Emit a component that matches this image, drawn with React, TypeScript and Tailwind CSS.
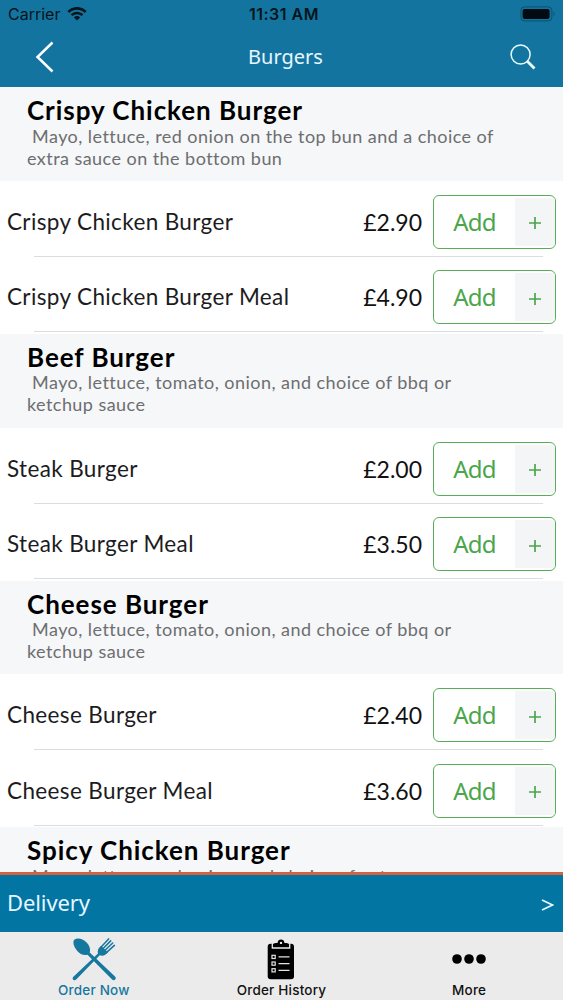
import React from 'react';

interface MenuItem {
  name: string;
  price: string;
}

interface MenuSection {
  title: string;
  description: string;
  items: MenuItem[];
}

const sections: MenuSection[] = [
  {
    title: 'Crispy Chicken Burger',
    description: ' Mayo, lettuce, red onion on the top bun and a choice of\nextra sauce on the bottom bun',
    items: [
      { name: 'Crispy Chicken Burger', price: '£2.90' },
      { name: 'Crispy Chicken Burger Meal', price: '£4.90' },
    ],
  },
  {
    title: 'Beef Burger',
    description: ' Mayo, lettuce, tomato, onion, and choice of bbq or\nketchup sauce',
    items: [
      { name: 'Steak Burger', price: '£2.00' },
      { name: 'Steak Burger Meal', price: '£3.50' },
    ],
  },
  {
    title: 'Cheese Burger',
    description: ' Mayo, lettuce, tomato, onion, and choice of bbq or\nketchup sauce',
    items: [
      { name: 'Cheese Burger', price: '£2.40' },
      { name: 'Cheese Burger Meal', price: '£3.60' },
    ],
  },
  {
    title: 'Spicy Chicken Burger',
    description: ' Mayo, lettuce, red onion, and choice of extra sauce',
    items: [],
  },
];

function WifiIcon() {
  return (
    <svg width="20" height="14" viewBox="0 0 20 14" fill="none" stroke="#06141c">
      <path d="M1.3 4.9a12.4 12.4 0 0 1 17.4 0" strokeWidth="2.8" />
      <path d="M4.5 8.2a7.9 7.9 0 0 1 11 0" strokeWidth="2.5" />
      <path d="M10 13.6 6.9 10.4a4.4 4.4 0 0 1 6.2 0Z" fill="#06141c" stroke="none" />
    </svg>
  );
}

function BatteryIcon() {
  return (
    <svg width="36" height="16" viewBox="0 0 36 16" fill="none">
      <rect x="0.9" y="0.9" width="31" height="14" rx="3.6" stroke="#0c506f" strokeWidth="1" />
      <rect x="2.6" y="2.9" width="27" height="10" rx="1.8" fill="#020b12" />
      <path d="M33.6 5.6c1.4.8 1.4 3.9 0 4.7Z" fill="#0c506f" />
    </svg>
  );
}

function CutleryIcon() {
  return (
    <svg width="44" height="44" viewBox="0 0 44 44" fill="#16779f">
      {/* spoon */}
      <path d="M2.500 1.600C5.400-.6 11 .8 14.600 4.400c3 3 4.200 7 3.100 10.100L43 38.600c1 1 .9 2.200.1 3s-2 .8-3-.2L15.500 16.700c-3.100 1-7-.2-9.700-3.200C2 9.400 0 4 2.500 1.600Z" />
      {/* fork */}
      <path d="M29 7.800 36 14.300c-2.300 3.200-5.300 4-8.300 3L4.200 41.600c-1 1-2.200.9-3 .1s-.8-2 .2-3L26 15.600c-1-3 .5-5.600 3-7.800Z" />
      <path
        d="M29.600 8.600 36.600.900M31.400 10.200l7.300-7.300M33.300 12l7.400-7M35.200 13.900l7.200-6.500"
        fill="none"
        stroke="#16779f"
        strokeWidth="1.500"
        strokeLinecap="round"
      />
    </svg>
  );
}

function ClipboardIcon() {
  return (
    <svg width="28" height="41" viewBox="0 0 28 41">
      <rect x="0.700" y="4.800" width="26.300" height="35.400" rx="3" fill="#000" />
      <path d="M5.300 4v5h17.400V4" fill="none" stroke="#ebebeb" strokeWidth="1.300" />
      <path d="M6.600 7.800V5.700Q6.600 4 8.600 4h1.900Q11 .6 14 .6T17.500 4h1.900q2 0 2 1.700v2.100Z" fill="#000" />
      <circle cx="14" cy="3.900" r="1.200" fill="#ebebeb" />
      <g fill="none" stroke="#e4e4e4" strokeWidth="1.200">
        <rect x="5" y="16.300" width="3.200" height="3.200" />
        <rect x="5" y="23" width="3.200" height="3.200" />
        <rect x="5" y="29.700" width="3.200" height="3.200" />
        <path d="M11.500 17.900h11M11.500 24.600h11M11.500 31.300h11" />
      </g>
    </svg>
  );
}

function AddButton() {
  return (
    <button className="flex h-[54px] w-[123px] shrink-0 overflow-hidden rounded-[6px] border-[1.5px] border-[#58ad57] bg-white text-[#4ba64b]">
      <span className="w-[81px] pt-[1px] text-center font-['Noto_Sans'] text-[24px] leading-[50px] tracking-[-0.8px]">Add</span>
      <span className="my-[2px] flex flex-1 items-center justify-center bg-[#f3f5f7]">
        <svg width="12" height="12" viewBox="0 0 12 12" className="mt-[3px]" stroke="#4ba64b" strokeWidth="1.700">
          <path d="M6 0v12M0 6h12" />
        </svg>
      </span>
    </button>
  );
}

function ItemRow({ name, price }: MenuItem) {
  return (
    <div className="flex h-[75.6px] flex-col justify-between bg-white">
      <div className="flex items-center pt-[14px] pr-[7px] pl-[7px]">
        <span className="flex-1 text-[22.5px] leading-[54px] tracking-[0.37px] whitespace-nowrap text-[#1c1c1e]">{name}</span>
        <span className="mr-[11px] text-[23px] leading-[54px] text-[#111]">{price}</span>
        <AddButton />
      </div>
      <div className="mr-[20px] -mb-[0.5px] ml-[34px] h-px shrink-0 bg-[#dcdddf]" />
    </div>
  );
}

export default function App() {
  return (
    <div className="flex h-[1000px] w-[563px] flex-col overflow-hidden bg-white font-[Lato,sans-serif]">
      <header className="h-[87px] shrink-0 bg-[#13759f]">
        <div className="grid h-[28px] grid-cols-3 items-center pr-[7px] pl-[8px] font-[Inter,sans-serif] text-[16px] text-[#06141c]">
          <div className="flex items-center gap-[7px]">
            <span>Carrier</span>
            <WifiIcon />
          </div>
          <span className="pl-[4px] text-center font-semibold tracking-[0.5px] whitespace-nowrap">11:31 AM</span>
          <div className="flex justify-end">
            <BatteryIcon />
          </div>
        </div>
        <div className="grid h-[58px] grid-cols-3 items-center pr-[27px] pl-[35px] text-white">
          <svg width="19" height="32" viewBox="0 0 19 32" fill="none" stroke="#fff" strokeWidth="2.500">
            <path d="M17.500 1.500 2.500 16l15 14.500" />
          </svg>
          <h1 className="text-center font-['Noto_Sans'] text-[20px] text-[#e8f7ff]">Burgers</h1>
          <svg width="26" height="26" viewBox="0 0 26 26" fill="none" stroke="#e8fbff" className="justify-self-end">
            <circle cx="10.600" cy="10.500" r="9.500" strokeWidth="1.500" />
            <path d="m17 17 7.500 7.500" strokeWidth="2.800" />
          </svg>
        </div>
      </header>

      <main className="min-h-0 flex-1 overflow-hidden">
        {sections.map((section) => (
          <section key={section.title} className="pb-[1.8px]">
            <div className="h-[93.8px] bg-[#f6f7f9] pt-[8px] pl-[27px]">
              <h2 className="text-[26px] leading-[31px] font-bold tracking-[0.95px] text-black">{section.title}</h2>
              <p className="-mt-[1.5px] text-[18px] leading-[22px] tracking-[0.45px] whitespace-pre text-[#6d6e70]">
                {section.description}
              </p>
            </div>
            {section.items.map((item) => (
              <ItemRow key={item.name} {...item} />
            ))}
          </section>
        ))}
      </main>

      <div className="flex h-[60px] shrink-0 items-center justify-between border-t-[3px] border-[#d5623f] bg-[#0275a3] pr-[9px] pl-[7px] text-[#e8f7ff]">
        <span className="-mt-[2px] font-['Noto_Sans'] text-[22px] tracking-[-0.1px]">Delivery</span>
        <svg width="13" height="12" viewBox="0 0 13 12" fill="none" stroke="#e8fbff" strokeWidth="1.800" className="mt-[2px]">
          <path d="m1 1 10.500 5L1 11" />
        </svg>
      </div>

      <nav className="grid h-[68px] shrink-0 grid-cols-3 bg-[#ebebeb] font-[Inter,sans-serif] text-[13.500px] font-medium tracking-[0.2px] text-[#111]">
        <div className="flex flex-col items-center pt-[6px] text-[#16779f]">
          <CutleryIcon />
          <span className="leading-[17px]">Order Now</span>
        </div>
        <div className="flex flex-col items-center pt-[7px]">
          <ClipboardIcon />
          <span className="pt-[2px] leading-[17px]">Order History</span>
        </div>
        <div className="flex flex-col items-center pt-[22px]">
          <svg width="34" height="10" viewBox="0 0 34 10" fill="#000">
            <circle cx="5" cy="5" r="4.800" />
            <circle cx="17" cy="5" r="4.800" />
            <circle cx="29" cy="5" r="4.800" />
          </svg>
          <span className="pt-[18px] leading-[17px]">More</span>
        </div>
      </nav>
    </div>
  );
}
